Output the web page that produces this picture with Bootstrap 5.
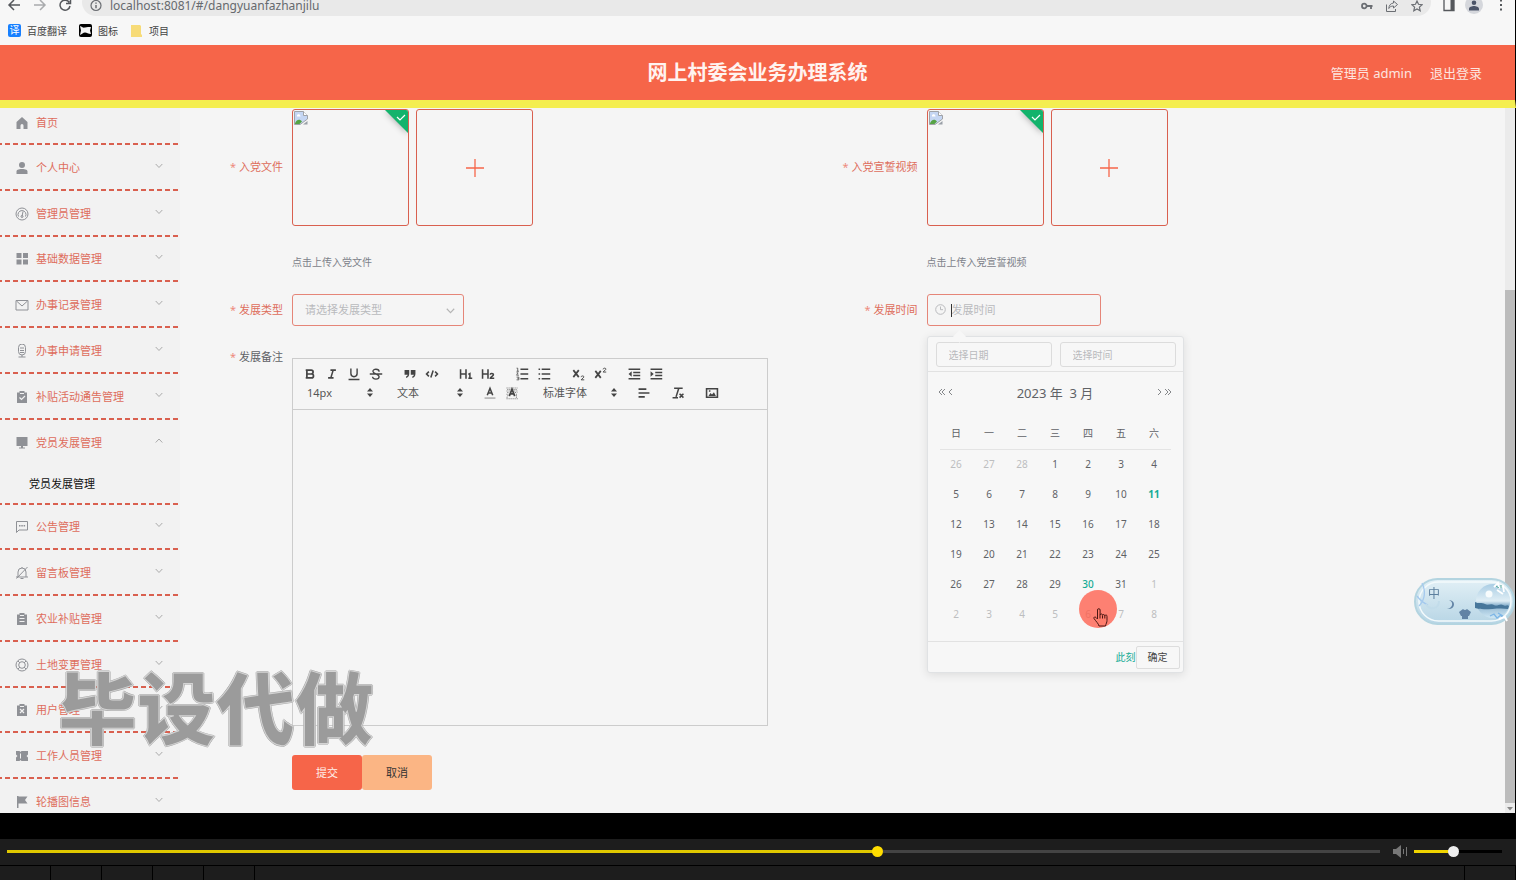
<!DOCTYPE html>
<html lang="zh-CN">
<head>
<meta charset="utf-8">
<meta name="viewport" content="width=device-width, initial-scale=1">
<title>网上村委会业务办理系统</title>
<link href="https://cdn.jsdelivr.net/npm/bootstrap@5.3.0/dist/css/bootstrap.min.css" rel="stylesheet">
<style>
:root{--brand:#f66549;--line:#d9604f;--ink:#606266;--muted:#b9babd;--teal:#14ab95}
body{font-family:"Noto Sans","Noto Sans CJK SC",sans-serif;font-size:11px;line-height:16px;color:var(--ink);background:#f5f5f5}
button,input,select,textarea{font:inherit;color:inherit}
svg{display:block;flex:none}
a{text-decoration:none;color:inherit}
.ln{fill:none;stroke:currentColor}
/* browser chrome */
.chrome{background:#f7f7f7;border-right:1px solid #000}
.toolbar{height:16px;overflow:hidden;color:#55585c}
.address{height:28px;margin-top:-12px;padding:0 8px;border-radius:14px;background:#e9e9e9;font-size:12px;color:#6b6e73}
.address input{color:#66696e;outline:0}
.address .acts{gap:13px}
.chrome-end{gap:16px;padding:0 12px}
.avatar{width:18px;height:18px;border-radius:50%;background:#d5d7dc;color:#4b5468;margin-top:-4px}
.bookmarks{height:29px;gap:12px;font-size:10px;color:#444}
.bookmarks a{gap:6px}
.tile{width:13px;height:13px;border-radius:2px;line-height:12px}
.tile.fanyi{background:#1780ff}
/* site header */
.site-head{height:63px;background:var(--brand);border-bottom:8px solid #f4ee50;border-right:1px solid #000;color:#fde5e0;padding-top:1px}
.site-head h1{font-size:20px;line-height:24px;color:#fff3f0}
.site-head .user-links{right:33px;font-size:13px;gap:18px}
/* sidebar */
.work{border-right:1px solid #000;min-height:0}
.side{width:180px;background:#f2f2f2}
.side li{flex:1 1 0;min-height:0;position:relative}
.side li::after{content:"";position:absolute;left:0;right:1px;bottom:0;height:2px;background:repeating-linear-gradient(90deg,#d9604f 0 2px,transparent 2px 5px,#d9604f 5px 8px)}
.side li.first{flex:0 0 37px}
.side li.opened{flex:0 0 85px}
.side li.tail{flex:0 0 34px}
.side li.tail::after{display:none}
.side a.entry{height:100%;padding:0 17px 0 15px;gap:7px;color:#de6d5c}
.side li.first a.entry{padding-bottom:8px}
.side li.tail a.entry{height:46px}
.side li.opened a.entry{height:46px}
.side .entry svg:first-child{color:#8f9196}
.side .entry .chev{color:#aaa;margin-bottom:4px}
.side .sub{padding-left:29px;height:36px;color:#111}
/* form */
.main-pane{padding:1px 28px 0}
.lab{width:75px;margin-right:9px;text-align:right;white-space:nowrap;color:#de6d5c;flex:none}
.lab i{font-style:normal;color:#ee8a7c;margin-right:3px}
.lab.plain{color:var(--ink);margin-top:-9px}
.lab.tall{padding-top:50px}
.thumb{width:117px;height:117px;border:1px solid var(--line);border-radius:3px;background:transparent;position:relative;overflow:hidden;padding:0;color:var(--brand)}
.thumb .flag{position:absolute;right:0;top:0;filter:drop-shadow(0 1px 3px rgba(0,0,0,.3))}
.thumb .broken{position:absolute;left:1px;top:1px}
.uploads{gap:7px}
.tip{font-size:10px;color:#7d828a;margin:28px 0 24px}
.field{height:32px;border:1px solid #e58578;border-radius:3px;background:transparent;outline:0;width:100%}
.field::placeholder,.mini::placeholder{color:var(--muted);opacity:1}
.pick{width:172px;position:relative}
.pick select{appearance:none;padding:0 12px;color:var(--muted)}
.pick svg{position:absolute;right:9px;top:13px;color:#b5b5b5}
.when{width:174px;position:relative}
.when input.field{padding:0 8px 2px 24px}
.when .clock{position:absolute;left:8px;top:10px;color:#b9babd}
.when .caret{position:absolute;left:24px;top:10px;width:1px;height:13px;background:#333}
/* editor */
.editor{width:100%;max-width:476px;height:368px;border:1px solid #ccc}
.tools{padding:5px 6px 7px;border-bottom:1px solid #ccc;color:#444}
.tools .line{height:19px;gap:12px}
.tools button{width:22px;height:19px;border:0;background:none;padding:0;display:flex;align-items:center;justify-content:center}
.tools .drop{position:relative}
.tools .drop select{appearance:none;border:0;background:none;width:100%;height:19px;line-height:19px;padding:0 8px;color:#555}
.tools .drop svg{position:absolute;right:4px;top:5px}
.w-size{width:78px}.w-font{width:86px}
.editor textarea{border:0;resize:none;background:transparent;outline:0}
.submit-row{margin:29px 0 0 84px}
.act{width:70px;height:35px;border:0;border-radius:3px;padding:0}
.act.send{background:var(--brand);color:#fff0ec}
.act.cancel{background:#fbb584;color:#333}
/* date popover */
.pop{position:absolute;left:0;top:42px;width:257px;background:#f7f7f7;border:1px solid #e0e2e4;border-radius:3px;box-shadow:0 2px 10px rgba(0,0,0,.1);z-index:5}
.pop .tip-arrow{position:absolute;left:27px;top:-5px;width:9px;height:9px;background:#f7f7f7;transform:rotate(45deg)}
.pop .top{padding:5px 7px 4px 8px;gap:8px;border-bottom:1px solid #e2e2e2}
.mini{height:25px;min-width:0;border:1px solid #dcdcdc;border-radius:3px;background:transparent;font-size:10px;padding:0 12px;outline:0}
.month{height:42px;font-size:13px;padding:0 10px}
.month .btns{margin-bottom:3px}
.month button{border:0;background:none;padding:0;color:#85878a}
.days{width:231px;margin:0 12px 12px;font-size:10px;text-align:center;table-layout:fixed}
.days th{height:35px;font-weight:400;border-bottom:1px solid #e4e4e4;padding:3px 0 0}
.days td{height:30px;padding:0}
.days .off{color:#bdbec0}
.days .now{color:var(--teal);font-weight:700}
.days .near{color:var(--teal);font-weight:500}
.pop .foot{height:31px;border-top:1px solid #e2e2e2;padding-right:3px;font-size:10px}
.foot .ok{width:44px;height:23px;border:1px solid #ddd;border-radius:2px;background:transparent;color:#444;padding:0}
.foot .instant{border:0;background:none;color:var(--teal);padding:0}
.halo{position:absolute;left:151px;top:253px;width:38px;height:38px;border-radius:50%;background:rgba(255,87,68,.74)}
.halo svg{position:absolute;left:14px;top:18px}
/* scroll rail */
.rail{width:10px;background:#ebebeb;padding-top:182px}
.rail .grip{background:#bcbcbc;flex:1}
/* player */
.gapbar{height:26px;background:#000}
.player{height:26px;background:#1d1d1d;padding:0 14px 2px 7px;color:#777}
.player input{appearance:none;height:3px;margin:0;outline:0;--at:63%}
.player input.seek{background:linear-gradient(90deg,#e0c800 var(--at),#444 var(--at))}
.player input.vol{width:88px;background:linear-gradient(90deg,#f0d400 var(--at),#000 var(--at))}
.player input::-webkit-slider-thumb{appearance:none;width:11px;height:11px;border-radius:50%;background:#ffdd00;border:0}
.player input.vol::-webkit-slider-thumb{background:#eee}
.player svg{margin:0 7px 0 13px}
.cells{height:15px;background:#1d1d1d;border-top:1px solid #000}
.cells span{width:51px;border-right:1px solid #000}
/* overlays */
.stamp{position:fixed;left:58px;bottom:135px;font-family:"Noto Sans CJK SC",sans-serif;font-weight:900;font-size:79px;line-height:80px;color:#9b9b9b;-webkit-text-stroke:1px #d4d4d4;text-shadow:1px 0 0 #a8a8a8,-1px 0 0 #a8a8a8,0 1px 0 #a8a8a8,0 -1px 0 #a8a8a8;pointer-events:none;z-index:8;white-space:nowrap}
.ime{position:fixed;right:1px;bottom:255px;z-index:8;width:101px;height:47px;color:#5c7f9e}
.ime span{position:absolute;left:14px;top:8px;font-size:12px}
</style>
</head>
<body class="vh-100 d-flex flex-column overflow-hidden">
<svg width="0" height="0" class="position-absolute">
  <symbol id="down" viewBox="0 0 8 6"><path class="ln" d="M.7 1 4 4.500 7.300 1"/></symbol>
  <symbol id="updown" viewBox="0 0 6 9"><path fill="currentColor" d="M3 0 6 3.500H0zM3 9 0 5.500h6z"/></symbol>
  <symbol id="broken" viewBox="0 0 14 14"><path d="M.5.500h9l4 4V8L6 13.500H.5z" fill="#c5d6f3" stroke="#a0a3a8"/><path d="M9.500.500v4h4" fill="#fff" stroke="#a0a3a8"/><path d="M1 12.500c1-4 5-5 7-2L5.500 13H1z" fill="#56a344"/><path d="M3 4.500c1-2 3-1 3 0 1 0 1 1 0 1H3z" fill="#fff"/><path d="M9 13.500h4.500V10z" fill="#9aa0a8"/></symbol>
  <symbol id="flag" viewBox="0 0 23 23"><path d="M0 0h23v23z" fill="#13b36c"/><path d="m12 7 3 3 5-5" fill="none" stroke="#fff" stroke-width="1.200"/></symbol>
  <symbol id="plus" viewBox="0 0 18 18"><path class="ln" stroke-width="1.300" d="M9 0v18M0 9h18"/></symbol>
  <symbol id="clip" viewBox="0 0 12 12"><path fill="currentColor" d="M1 1.500h2.500V0h5v1.500H11V12H1z"/><path d="M4 2.500h4" stroke="#f2f2f2"/></symbol>
</svg>

<div class="chrome">
  <div class="toolbar d-flex align-items-start">
    <svg width="82" height="14" viewBox="0 0 82 14" class="ln" stroke-width="1.500"><path d="M20 5H9.500M14 0 9 5l5 5"/><path d="M34 5h10.500M40 0l5 5-5 5" stroke="#a9abad"/><path d="M69.300 2.500A5 5 0 1 0 70 6M70.500-1v4.500H66"/></svg>
    <div class="address d-flex align-items-center flex-fill">
      <svg class="me-2 mt-2" width="12" height="12" viewBox="0 0 12 12"><g class="ln"><circle cx="6" cy="5.500" r="5" stroke-width="1.200"/><path d="M6 5v3.200M6 2.500v1.300" stroke-width="1.500"/></g></svg>
      <input class="border-0 bg-transparent flex-fill p-0 mt-2" aria-label="地址" value="localhost:8081/#/dangyuanfazhanjilu">
      <div class="acts d-flex align-items-center mt-2">
        <svg width="12" height="8" viewBox="0 0 12 8"><path class="ln" stroke-width="1.800" d="M6 4h5.500M10 4v3M1 4a2.300 2.300 0 1 0 4.600 0A2.300 2.300 0 1 0 1 4"/></svg>
        <svg width="12" height="12" viewBox="0 0 12 12"><path class="ln" d="M.5 4.500v7h9V9M7.500 1l4 3.500-4 3.500V6C5 6 3.500 7 2.800 8.500 3 5.500 4.500 3.300 7.500 3z"/></svg>
        <svg width="12" height="12" viewBox="0 0 12 12"><path class="ln" stroke-width="1.200" d="m6 1 1.500 3.300 3.600.4-2.700 2.400.8 3.600L6 8.900l-3.200 1.800.8-3.600L.9 4.700l3.600-.4z"/></svg>
      </div>
    </div>
    <div class="chrome-end d-flex">
      <svg width="12" height="12" viewBox="0 0 12 12"><path class="ln" d="M1 0v10.500h10V0" stroke-width="1.300"/><path fill="currentColor" d="M7.500 0H11v10H7.500z"/></svg>
      <div class="avatar d-flex justify-content-center pt-1" style="margin-left:-6px"><svg width="10" height="11" viewBox="0 0 10 11"><path fill="currentColor" d="M2.700 2.700a2.300 2.300 0 1 0 4.600 0 2.300 2.300 0 1 0-4.600 0M0 10.500V8.800C0 7 3 6 5 6s5 1 5 2.800v1.700z"/></svg></div>
      <svg width="4" height="11" viewBox="0 0 4 11"><path fill="currentColor" d="M1 0h2v1.500H1zM1 4h2v2H1zM1 8.500h2v2H1z"/></svg>
    </div>
  </div>
  <nav class="bookmarks d-flex align-items-center ps-2">
    <a href="#" class="d-flex align-items-center"><span class="tile fanyi text-white text-center">译</span>百度翻译</a>
    <a href="#" class="d-flex align-items-center"><span class="tile bg-black d-flex align-items-center justify-content-center"><svg width="11" height="9" viewBox="0 0 11 9"><path fill="#f4f4f4" d="M0 0c2 1 3 2 5 1.500S9 1 11 1L10 4.500 11 8C8 8 7 6.500 5 6.500S2 8 0 9l1-4.500z"/></svg></span>图标</a>
    <a href="#" class="d-flex align-items-center"><svg width="13" height="12" viewBox="0 0 13 12"><path fill="#f7db77" d="M1 0h9l1 1v8l1 1v2H1z"/></svg>项目</a>
  </nav>
</div>

<header class="site-head d-flex align-items-center justify-content-center position-relative">
  <h1 class="m-0 fw-bold">网上村委会业务办理系统</h1>
  <div class="user-links position-absolute d-flex"><span>管理员 admin</span><a href="#">退出登录</a></div>
</header>

<div class="work d-flex flex-fill overflow-hidden">
  <ul class="side list-unstyled m-0 d-flex flex-column flex-shrink-0 overflow-hidden">
    <li class="first"><a class="entry d-flex align-items-center" href="#"><svg width="14" height="12" viewBox="0 0 14 12"><path fill="currentColor" d="M7 0 1.500 5v7h4V8.500a1.500 1.500 0 0 1 3 0V12h4V5z"/></svg><span class="flex-fill">首页</span></a></li>
    <li><a class="entry d-flex align-items-center" href="#"><svg width="14" height="12" viewBox="0 0 14 12"><path fill="currentColor" d="M4 3a3 3 0 1 0 6 0 3 3 0 1 0-6 0M1.500 12V9.500C1.500 8 3 7 7 7s5.500 1 5.500 2.500V12z"/></svg><span class="flex-fill">个人中心</span><svg class="chev" width="8" height="6"><use href="#down"/></svg></a></li>
    <li><a class="entry d-flex align-items-center" href="#"><svg width="14" height="14" viewBox="0 0 14 14"><g class="ln"><circle cx="7" cy="7" r="6"/><path d="M3.500 9.500a4 4 0 1 1 7 0M7 9.500l1-5" /><circle cx="7" cy="9.500" r="1"/></g></svg><span class="flex-fill">管理员管理</span><svg class="chev" width="8" height="6"><use href="#down"/></svg></a></li>
    <li><a class="entry d-flex align-items-center" href="#"><svg width="14" height="12" viewBox="0 0 14 12"><path fill="currentColor" d="M1.500 0h5v5h-5zM8 0h5v5H8zM1.500 6.500h5v5h-5zM8 6.500h5v5H8z"/></svg><span class="flex-fill">基础数据管理</span><svg class="chev" width="8" height="6"><use href="#down"/></svg></a></li>
    <li><a class="entry d-flex align-items-center" href="#"><svg width="14" height="12" viewBox="0 0 14 12"><path class="ln" d="M1 1.500h12v9.500H1zM1.500 2 7 7l5.500-5"/></svg><span class="flex-fill">办事记录管理</span><svg class="chev" width="8" height="6"><use href="#down"/></svg></a></li>
    <li><a class="entry d-flex align-items-center" href="#"><svg width="14" height="14" viewBox="0 0 14 14"><path class="ln" d="M3.500 3.500a3 3 0 0 1 7 0v4a3.500 3.500 0 0 1-7 0zM7 11v2M3.500 13h7M5 4h4M5 6.500h4M5 8.500h4"/></svg><span class="flex-fill">办事申请管理</span><svg class="chev" width="8" height="6"><use href="#down"/></svg></a></li>
    <li><a class="entry d-flex align-items-center" href="#"><svg width="14" height="12" viewBox="0 0 14 12"><use href="#clip" x="1" width="12" height="12"/><path d="m4.500 6.500 2 2L10 5" fill="none" stroke="#f2f2f2" stroke-width="1.200"/></svg><span class="flex-fill">补贴活动通告管理</span><svg class="chev" width="8" height="6"><use href="#down"/></svg></a></li>
    <li class="opened"><a class="entry d-flex align-items-center" href="#"><svg width="14" height="12" viewBox="0 0 14 12"><path fill="currentColor" d="M1.500 0h11v9h-11zM6 9h2v1.500h2v1H4v-1h2z"/></svg><span class="flex-fill">党员发展管理</span><svg class="chev" width="8" height="6" viewBox="0 0 8 6"><path class="ln" d="M.7 4.500 4 1l3.300 3.500"/></svg></a>
      <a class="sub d-flex align-items-center" href="#">党员发展管理</a></li>
    <li><a class="entry d-flex align-items-center" href="#"><svg width="14" height="12" viewBox="0 0 14 12"><path class="ln" d="M1.500.500h11V9H4l-2.500 2.500z"/><path d="M4 4.700h1.500M6.300 4.700h1.500M8.600 4.700h1.500" stroke="currentColor" stroke-width="1.500"/></svg><span class="flex-fill">公告管理</span><svg class="chev" width="8" height="6"><use href="#down"/></svg></a></li>
    <li><a class="entry d-flex align-items-center" href="#"><svg width="14" height="14" viewBox="0 0 14 14"><path class="ln" d="M3 11V6a4 4 0 0 1 8 0v5M1 11h12M1.500 12.500 12.500 1M7 1v1M5.500 12.500h3"/></svg><span class="flex-fill">留言板管理</span><svg class="chev" width="8" height="6"><use href="#down"/></svg></a></li>
    <li><a class="entry d-flex align-items-center" href="#"><svg width="14" height="12" viewBox="0 0 14 12"><use href="#clip" x="1" width="12" height="12"/><path d="M4.500 5.500h5M4.500 8.500h5" stroke="#f2f2f2" stroke-width="1.200"/></svg><span class="flex-fill">农业补贴管理</span><svg class="chev" width="8" height="6"><use href="#down"/></svg></a></li>
    <li><a class="entry d-flex align-items-center" href="#"><svg width="14" height="14" viewBox="0 0 14 14"><g class="ln"><circle cx="7" cy="7" r="6"/><circle cx="7" cy="7" r="3.300"/><path d="m3 3 2 2M11 3 9 5M3 11l2-2M11 11 9 9"/></g></svg><span class="flex-fill">土地变更管理</span><svg class="chev" width="8" height="6"><use href="#down"/></svg></a></li>
    <li><a class="entry d-flex align-items-center" href="#"><svg width="14" height="12" viewBox="0 0 14 12"><use href="#clip" x="1" width="12" height="12"/><path d="m5 5 4 4M9 5 5 9" stroke="#f2f2f2" stroke-width="1.200"/></svg><span class="flex-fill">用户管理</span><svg class="chev" width="8" height="6"><use href="#down"/></svg></a></li>
    <li><a class="entry d-flex align-items-center" href="#"><svg width="14" height="10" viewBox="0 0 14 10"><path fill="currentColor" d="M1 0h3.500l1 1 1-1H13v3.500L11.500 5 13 6.500V10H6.500l-1-1-1 1H1V6.500L2.500 5 1 3.500z"/><path d="M5.500 2.500v5" stroke="#f2f2f2"/></svg><span class="flex-fill">工作人员管理</span><svg class="chev" width="8" height="6"><use href="#down"/></svg></a></li>
    <li class="tail"><a class="entry d-flex align-items-center" href="#"><svg width="14" height="12" viewBox="0 0 14 12"><path fill="currentColor" d="M2 0h1.500v.5h9L10 4l2.500 3.500h-9V12H2z"/></svg><span class="flex-fill">轮播图信息</span><svg class="chev" width="8" height="6"><use href="#down"/></svg></a></li>
  </ul>

  <form class="main-pane flex-fill">
    <div class="row g-0">
      <div class="col-6 d-flex">
        <div class="lab tall"><i>*</i>入党文件</div>
        <div>
          <div class="uploads d-flex">
            <div class="thumb"><svg class="broken" width="14" height="14"><use href="#broken"/></svg><svg class="flag" width="23" height="23"><use href="#flag"/></svg></div>
            <button type="button" class="thumb d-flex align-items-center justify-content-center" aria-label="上传入党文件"><svg width="18" height="18"><use href="#plus"/></svg></button>
          </div>
          <p class="tip">点击上传入党文件</p>
        </div>
      </div>
      <div class="col-6 d-flex">
        <div class="lab tall"><i>*</i>入党宣誓视频</div>
        <div>
          <div class="uploads d-flex">
            <div class="thumb"><svg class="broken" width="14" height="14"><use href="#broken"/></svg><svg class="flag" width="23" height="23"><use href="#flag"/></svg></div>
            <button type="button" class="thumb d-flex align-items-center justify-content-center" aria-label="上传入党宣誓视频"><svg width="18" height="18"><use href="#plus"/></svg></button>
          </div>
          <p class="tip">点击上传入党宣誓视频</p>
        </div>
      </div>
      <div class="col-6 d-flex align-items-center">
        <label class="lab" for="kind"><i>*</i>发展类型</label>
        <div class="pick"><select id="kind" class="field"><option>请选择发展类型</option></select><svg width="9" height="8" viewBox="0 0 8 6"><use href="#down"/></svg></div>
      </div>
      <div class="col-6 d-flex align-items-center">
        <label class="lab" for="when"><i>*</i>发展时间</label>
        <div class="when">
          <input id="when" class="field" placeholder="发展时间">
          <svg class="clock" width="11" height="11" viewBox="0 0 11 11"><g class="ln"><circle cx="5.500" cy="5.500" r="4.800"/><path d="M5.500 2.500v3.200H8"/></g></svg><span class="caret"></span>
          <div class="pop">
            <span class="tip-arrow"></span>
            <div class="top d-flex"><input class="mini flex-fill w-50" aria-label="选择日期" placeholder="选择日期"><input class="mini flex-fill w-50" aria-label="选择时间" placeholder="选择时间"></div>
            <div class="month d-flex align-items-center justify-content-between">
              <div class="btns d-flex"><button type="button" aria-label="上一年"><svg width="8" height="8" viewBox="0 0 8 8"><path class="ln" d="M4 1 1 4l3 3M7 1 4 4l3 3"/></svg></button><button type="button" aria-label="上个月"><svg width="8" height="8" viewBox="0 0 8 8"><path class="ln" d="M6 1 3 4l3 3"/></svg></button></div>
              <span>2023 年&nbsp; 3 月</span>
              <div class="btns d-flex"><button type="button" aria-label="下个月"><svg width="8" height="8" viewBox="0 0 8 8"><path class="ln" d="m2 1 3 3-3 3"/></svg></button><button type="button" aria-label="下一年"><svg width="8" height="8" viewBox="0 0 8 8"><path class="ln" d="m1 1 3 3-3 3M4 1l3 3-3 3"/></svg></button></div>
            </div>
            <table class="days">
              <thead><tr><th>日</th><th>一</th><th>二</th><th>三</th><th>四</th><th>五</th><th>六</th></tr></thead>
              <tbody>
                <tr><td class="off">26</td><td class="off">27</td><td class="off">28</td><td>1</td><td>2</td><td>3</td><td>4</td></tr>
                <tr><td>5</td><td>6</td><td>7</td><td>8</td><td>9</td><td>10</td><td class="now">11</td></tr>
                <tr><td>12</td><td>13</td><td>14</td><td>15</td><td>16</td><td>17</td><td>18</td></tr>
                <tr><td>19</td><td>20</td><td>21</td><td>22</td><td>23</td><td>24</td><td>25</td></tr>
                <tr><td>26</td><td>27</td><td>28</td><td>29</td><td class="near">30</td><td>31</td><td class="off">1</td></tr>
                <tr><td class="off">2</td><td class="off">3</td><td class="off">4</td><td class="off">5</td><td class="off">6</td><td class="off">7</td><td class="off">8</td></tr>
              </tbody>
            </table>
            <div class="foot d-flex align-items-center justify-content-end"><button type="button" class="instant">此刻</button><button type="button" class="ok">确定</button></div>
            <div class="halo"><svg width="15" height="19" viewBox="0 0 15 19"><path d="M4.500 11V2a1.300 1.300 0 0 1 2.600 0v5a1.200 1.200 0 0 1 2.400.3 1.200 1.200 0 0 1 2.300.5 1.100 1.100 0 0 1 2.200.7v4c0 2-1 3-1.500 5.500H6C5.500 15.500 3 13.500 1 10.500c-.5-1.500 1-2 2-1z" fill="#ff7d6c" stroke="#4a1714"/><path d="M7 7v3.500M9.500 7.500v3M11.800 8v2.500" stroke="#4a1714"/></svg></div>
          </div>
        </div>
      </div>
    </div>

    <div class="d-flex" style="margin-top:32px">
      <label class="lab plain" for="memo"><i>*</i>发展备注</label>
      <div class="editor d-flex flex-column">
        <div class="tools">
          <div class="line d-flex">
            <div class="d-flex">
              <button type="button" aria-label="粗体"><svg width="14" height="14" viewBox="0 0 18 18"><path class="ln" stroke-width="2.200" d="M5 4h5.500a2.500 2.500 0 0 1 0 5H5zM5 9h6a2.500 2.500 0 0 1 0 5H5zM3.500 4H6M3.500 14H6"/></svg></button>
              <button type="button" aria-label="斜体"><svg width="14" height="14" viewBox="0 0 18 18"><path class="ln" stroke-width="2" d="M7 4h7M4 14h7M7.500 14l3-10"/></svg></button>
              <button type="button" aria-label="下划线"><svg width="14" height="14" viewBox="0 0 18 18"><path class="ln" stroke-width="1.800" d="M5 2v6.500a4 4 0 0 0 8 0V2M2 16h14"/></svg></button>
              <button type="button" aria-label="删除线"><svg width="14" height="14" viewBox="0 0 18 18"><path class="ln" stroke-width="1.700" d="M13 6c0-4-8-4-8-.5C5 9 13 8.500 13 12.500c0 4-8 4-8.500 0M1 9h16"/></svg></button>
            </div>
            <div class="d-flex">
              <button type="button" aria-label="引用"><svg width="14" height="14" viewBox="0 0 18 18"><path fill="currentColor" d="M2 4h6v5c0 3-2 5-4 5v-2c1 0 2-1 2-2H2zM10 4h6v5c0 3-2 5-4 5v-2c1 0 2-1 2-2h-4z"/></svg></button>
              <button type="button" aria-label="代码"><svg width="14" height="14" viewBox="0 0 18 18"><path class="ln" stroke-width="2" d="M5 6 2 9l3 3M13 6l3 3-3 3M10.500 4.500l-3 9"/></svg></button>
            </div>
            <div class="d-flex">
              <button type="button" aria-label="标题一"><svg width="14" height="14" viewBox="0 0 18 18"><path class="ln" stroke-width="2" d="M2 3v12M9 3v12M2 9h7M12 9.500l2-1V15M12 14.500h5"/></svg></button>
              <button type="button" aria-label="标题二"><svg width="14" height="14" viewBox="0 0 18 18"><path class="ln" stroke-width="2" d="M2 3v12M9 3v12M2 9h7M12 10c0-2.500 4-2 4 0 0 1.500-4 2.500-4 4.500h5"/></svg></button>
            </div>
            <div class="d-flex">
              <button type="button" aria-label="有序列表"><svg width="14" height="14" viewBox="0 0 18 18"><path class="ln" stroke-width="2" d="M7 3h10M7 9h10M7 15h10"/><path class="ln" d="M2 1.500h1.500v4M2 5.500h3M2 7.500h2l-2 3h3M2 13h3v3.500H2M3 14.500h2"/></svg></button>
              <button type="button" aria-label="无序列表"><svg width="14" height="14" viewBox="0 0 18 18"><path class="ln" stroke-width="2" d="M6 3h11M6 9h11M6 15h11M2 3h2M2 9h2M2 15h2"/></svg></button>
            </div>
            <div class="d-flex">
              <button type="button" aria-label="下标"><svg width="14" height="14" viewBox="0 0 18 18"><path class="ln" stroke-width="2.200" d="m3 4 7 9M10 4l-7 9"/><path class="ln" stroke-width="1.200" d="M13 13c0-2 4-2 3.500 0L13 16.500h4"/></svg></button>
              <button type="button" aria-label="上标"><svg width="14" height="14" viewBox="0 0 18 18"><path class="ln" stroke-width="2.200" d="m3 5 7 9M10 5l-7 9"/><path class="ln" stroke-width="1.200" d="M13 3c0-2 4-2 3.500 0L13 6.500h4"/></svg></button>
            </div>
            <div class="d-flex">
              <button type="button" aria-label="减少缩进"><svg width="14" height="14" viewBox="0 0 18 18"><path class="ln" stroke-width="2" d="M2 3h15M8 7h9M8 11h9M2 15h15"/><path fill="currentColor" d="M6 5.500v7L2 9z"/></svg></button>
              <button type="button" aria-label="增加缩进"><svg width="14" height="14" viewBox="0 0 18 18"><path class="ln" stroke-width="2" d="M2 3h15M8 7h9M8 11h9M2 15h15"/><path fill="currentColor" d="M2 5.500v7L6 9z"/></svg></button>
            </div>
          </div>
          <div class="line d-flex">
            <div class="drop w-size"><select aria-label="字号"><option>14px</option></select><svg width="6" height="9"><use href="#updown"/></svg></div>
            <div class="drop w-size"><select aria-label="段落"><option>文本</option></select><svg width="6" height="9"><use href="#updown"/></svg></div>
            <div class="d-flex">
              <button type="button" aria-label="文字颜色"><svg width="14" height="14" viewBox="0 0 18 18"><path class="ln" stroke-width="2" d="M5.500 12 9 3l3.500 9M6.500 9h5"/><path stroke="#999" stroke-width="1.500" d="M2 15.500h14"/></svg></button>
              <button type="button" aria-label="背景颜色"><svg width="14" height="14" viewBox="0 0 18 18"><path stroke="#777" stroke-width="1.300" stroke-dasharray="1.300 1.300" d="M2 2.500h14M3 4.500h4M11 4.500h5M2 6.500h4M12 6.500h4M3 8.500h2M13 8.500h3M2 10.500h3M14 10.500h2M3 12.500h1M14 12.500h2M2 14.500h2M14 14.500h2M2 16.500h15"/><path class="ln" stroke-width="2.200" d="M5.500 13 9 4l3.500 9M6.500 10h5"/></svg></button>
            </div>
            <div class="drop w-font"><select aria-label="字体"><option>标准字体</option></select><svg width="6" height="9"><use href="#updown"/></svg></div>
            <button type="button" aria-label="对齐"><svg width="14" height="14" viewBox="0 0 18 18"><path class="ln" stroke-width="2" d="M2 4h10M2 9h14M2 14h8"/></svg></button>
            <button type="button" aria-label="清除格式"><svg width="14" height="14" viewBox="0 0 18 18"><path class="ln" stroke-width="2" d="M4 3h11M10 3 6.500 14M2 15h7M11 10l5 5M16 10l-5 5"/></svg></button>
            <button type="button" aria-label="图片"><svg width="14" height="14" viewBox="0 0 18 18"><path class="ln" stroke-width="2" d="M2 3.500h14v11H2z"/><path fill="currentColor" d="m4.500 13 2.500-4 2 2 2.500-3 2.500 5zM5 5.500h2v2H5z"/></svg></button>
          </div>
        </div>
        <textarea id="memo" class="w-100 flex-fill"></textarea>
      </div>
    </div>
    <div class="submit-row d-flex"><button type="submit" class="act send">提交</button><button type="button" class="act cancel">取消</button></div>
  </form>

  <div class="rail d-flex flex-column align-items-center flex-shrink-0"><div class="grip w-100"></div><svg width="8" height="10" viewBox="0 0 8 10"><path fill="#888" d="M1 4h6L4 7.500z"/></svg></div>
</div>

<div class="gapbar"></div>
<div class="player d-flex align-items-center">
  <input type="range" class="seek flex-fill" aria-label="播放进度" min="0" max="1000" value="635" style="--at:63.5%">
  <svg width="14" height="13" viewBox="0 0 14 13"><path fill="currentColor" d="M0 4h3l5-4v13L3 9H0z"/><path class="ln" d="M10.500 4v5M13.500 2v9"/></svg>
  <input type="range" class="vol" aria-label="音量" min="0" max="100" value="44" style="--at:44%">
</div>
<div class="cells d-flex"><span></span><span></span><span></span><span></span><span></span><span class="flex-fill"></span><span></span></div>

<div class="stamp">毕设代做</div>
<div class="ime">
  <svg width="101" height="47" viewBox="0 0 101 47">
    <defs><linearGradient id="sky" x2="0" y2="1"><stop stop-color="#e2f0f6"/><stop offset="1" stop-color="#b7d5e5"/></linearGradient><linearGradient id="lake" x2="0" y2="1"><stop stop-color="#a9cde4"/><stop offset=".5" stop-color="#e0eef5"/><stop offset=".62" stop-color="#8fb5d0"/><stop offset="1" stop-color="#cfe7f4"/></linearGradient></defs>
    <rect x="1" y="1" width="99" height="45" rx="22.500" fill="url(#sky)" stroke="#b3d4e0" stroke-width="2"/>
    <rect x="5" y="4" width="92" height="39" rx="19.500" fill="none" stroke="#f3fafc" stroke-width="1.500"/>
    <path d="M8 5c4 8 3 17-3 23M3 18c3 4 6 7 11 9" fill="none" stroke="#a4c9ee" stroke-width="1.300"/><path d="M12 26c4 7 13 5 13-3" fill="none" stroke="#c2dcea" stroke-width="2"/>
    <circle cx="79" cy="23" r="17" fill="url(#lake)"/><path d="M61 24c3 2 7 0 10 2s6-1 9 1 6-2 9 0 4-1 6 1l-1 3c-10-2-24 2-33-1z" fill="#48779b"/>
    <circle cx="75" cy="16" r="3.500" fill="#f8fcfd"/><path d="m80 9 4-4 1 5 4-2 1 6M83 12l6 4" fill="none" stroke="#fff" stroke-width="1.800"/><path d="m82 8 3 2M87 7v3" stroke="#54a99c"/><path d="m76 38 4-2 3 4 4-3 2 4M84 35l5 3" fill="none" stroke="#7db6e6" stroke-width="1.300"/><path d="m85 41 6-2 2 4" fill="none" stroke="#fff" stroke-width="2"/>
    <path fill="#6283a5" d="M35 22c5 2 4 8-2 9 9 1 9-9 2-9zM45 34l4-3q2 2 4 0l4 3-2 4h-1v3h-6v-3h-1z"/>
  </svg><span>中</span>
</div>
<script src="https://cdn.jsdelivr.net/npm/bootstrap@5.3.0/dist/js/bootstrap.bundle.min.js"></script>
</body>
</html>
